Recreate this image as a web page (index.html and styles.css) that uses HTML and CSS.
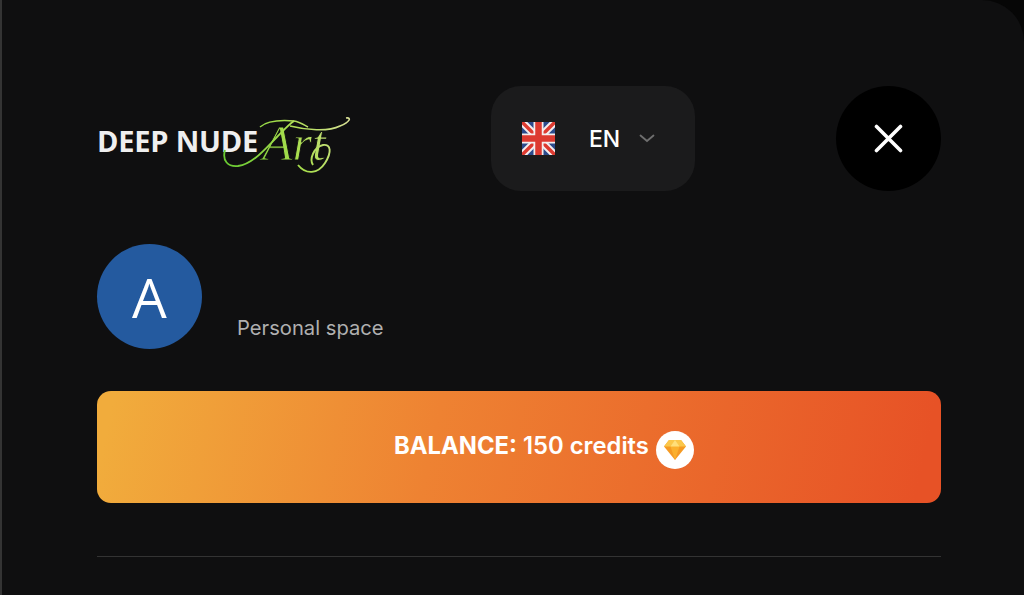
FILE: index.html
```html
<!DOCTYPE html>
<html lang="en">
<head>
<meta charset="utf-8">
<title>Deep Nude Art</title>
<link rel="stylesheet" href="styles.css">
</head>
<body>
<main class="panel">
  <header class="top">
    <a class="logo">
      <span class="logo-word">DEEP NUDE</span>
      <svg class="logo-art" width="130" height="60" viewBox="0 0 130 60" fill="none" aria-hidden="true">
        <defs>
          <linearGradient id="artg" gradientUnits="userSpaceOnUse" x1="0" y1="56" x2="130" y2="0">
            <stop offset="0" stop-color="#62c92f"/>
            <stop offset="0.55" stop-color="#a9de4e"/>
            <stop offset="1" stop-color="#dbe09a"/>
          </linearGradient>
        </defs>
        <text class="logo-art-text" x="40" y="43" fill="url(#artg)" stroke="#0f0f10" stroke-width="0.9">Art</text>
        <path d="M3 33C0 44 6 50 16 49C31 47 43 32 55 20C61 14 66 8 72 4" stroke="url(#artg)" stroke-width="1.8"/>
        <path d="M38 10C46 3 60 3 72 4C78 5 82 8 86 10" stroke="url(#artg)" stroke-width="1.5"/>
        <path d="M68 9C84 13 106 15 118 9C128 5 130 0 124 1" stroke="url(#artg)" stroke-width="1.6"/>
        <path d="M76 48C84 58 96 57 103 46C110 35 109 27 101 28C92 30 87 42 91 48" stroke="url(#artg)" stroke-width="1.9"/>
      </svg>
    </a>
    <button class="lang" type="button">
      <svg class="flag" width="33" height="33" viewBox="0 0 33 33" aria-hidden="true">
        <rect width="33" height="33" rx="3" fill="#2b4a8c"/>
        <path d="M0 0L33 33M33 0L0 33" stroke="#f4eeee" stroke-width="7.5"/>
        <path d="M0 0L33 33M33 0L0 33" stroke="#dd3a30" stroke-width="3.4"/>
        <path d="M16.5 0V33M0 16.5H33" stroke="#f4eeee" stroke-width="10"/>
        <path d="M16.5 0V33M0 16.5H33" stroke="#dd3a30" stroke-width="6.5"/>
      </svg>
      <span class="lang-code">EN</span>
      <svg class="chev" width="16" height="9" viewBox="0 0 16 9" fill="none" aria-hidden="true">
        <path d="M1.5 1.5L8 7L14.5 1.5" stroke="#6f6f6f" stroke-width="1.8" stroke-linecap="round"/>
      </svg>
    </button>
    <button class="close" type="button" aria-label="Close">
      <svg width="29" height="29" viewBox="0 0 29 29" fill="none" aria-hidden="true">
        <path d="M2.5 2.5L26.5 26.5M26.5 2.5L2.5 26.5" stroke="#fff" stroke-width="3.6" stroke-linecap="round"/>
      </svg>
    </button>
  </header>

  <section class="profile">
    <div class="avatar">A</div>
    <p class="space">Personal space</p>
  </section>

  <section class="balance">
    <span class="balance-text"><b>BALANCE:</b> 150 credits</span>
    <span class="gem">
      <svg width="24" height="22" viewBox="0 0 24 22" aria-hidden="true">
        <path d="M6 1H18L23 7.5L12 21L1 7.5Z" fill="#f59a23"/>
        <path d="M6 1H18L23 7.5H1Z" fill="#fbc74a"/>
        <path d="M7.5 7.5H16.5L12 21Z" fill="#fbb02d"/>
        <path d="M12 1L16.5 7.5H7.5Z" fill="#ffdf7a"/>
      </svg>
    </span>
  </section>

  <hr class="rule">
</main>
</body>
</html>
```
FILE: styles.css
```css
* { box-sizing: border-box; }

html, body {
  margin: 0;
  height: 100%;
  background: #060606;
  overflow: hidden;
}

.panel {
  height: 595px;
  padding: 86px 83px 0 95px;
  background: #0f0f10;
  border-left: 2px solid #343434;
  border-top-right-radius: 42px;
  font-family: Inter, "Liberation Sans", sans-serif;
  color: #fff;
}

.top {
  display: flex;
  align-items: center;
  justify-content: space-between;
  height: 105px;
}

.logo {
  position: relative;
  display: flex;
  align-items: center;
  width: 253px;
  height: 62px;
}

.logo-word {
  margin-top: 4px;
  font-family: "Open Sans", sans-serif;
  font-size: 29px;
  font-weight: 700;
  letter-spacing: -0.2px;
  color: #efefef;
  white-space: nowrap;
}

.logo-art {
  position: absolute;
  left: 125px;
  top: 9px;
  overflow: visible;
}

.logo-art-text {
  font-family: "Liberation Serif", serif;
  font-style: italic;
  font-size: 50px;
}

.lang {
  display: flex;
  align-items: center;
  width: 204px;
  height: 105px;
  padding: 0 0 0 31px;
  border: 0;
  border-radius: 30px;
  background: #1b1b1c;
  color: #fff;
  font: inherit;
}

.flag { flex: none; }

.lang-code {
  margin-left: 34px;
  font-size: 23px;
  font-weight: 500;
}

.chev { margin-left: 19px; }

.close {
  display: flex;
  align-items: center;
  justify-content: center;
  width: 105px;
  height: 105px;
  padding: 0;
  border: 0;
  border-radius: 50%;
  background: #000;
}

.profile {
  display: flex;
  align-items: flex-end;
  gap: 35px;
  margin-top: 53px;
}

.avatar {
  display: flex;
  align-items: center;
  justify-content: center;
  width: 105px;
  height: 105px;
  border-radius: 50%;
  background: #245a9f;
  font-family: "Open Sans", sans-serif;
  font-size: 55px;
  line-height: 1;
}

.space {
  margin: 0 0 8px;
  font-size: 20.2px;
  line-height: 26px;
  color: #b0b0b0;
}

.balance {
  display: flex;
  align-items: center;
  justify-content: center;
  gap: 7px;
  height: 112px;
  margin-top: 42px;
  padding-left: 50px;
  border-radius: 14px;
  background: linear-gradient(102deg, #f1ac3c 2%, #ee8232 40%, #e75226 97%);
}

.balance-text {
  margin-top: -3px;
  font-size: 23.8px;
  font-weight: 600;
  white-space: nowrap;
}

.balance-text b { font-weight: 700; }

.gem {
  display: flex;
  align-items: center;
  justify-content: center;
  width: 38px;
  height: 38px;
  margin-top: 6px;
  border-radius: 50%;
  background: #fff;
}

.rule {
  height: 1px;
  margin: 53px 0 0;
  border: 0;
  background: #333;
}
```
